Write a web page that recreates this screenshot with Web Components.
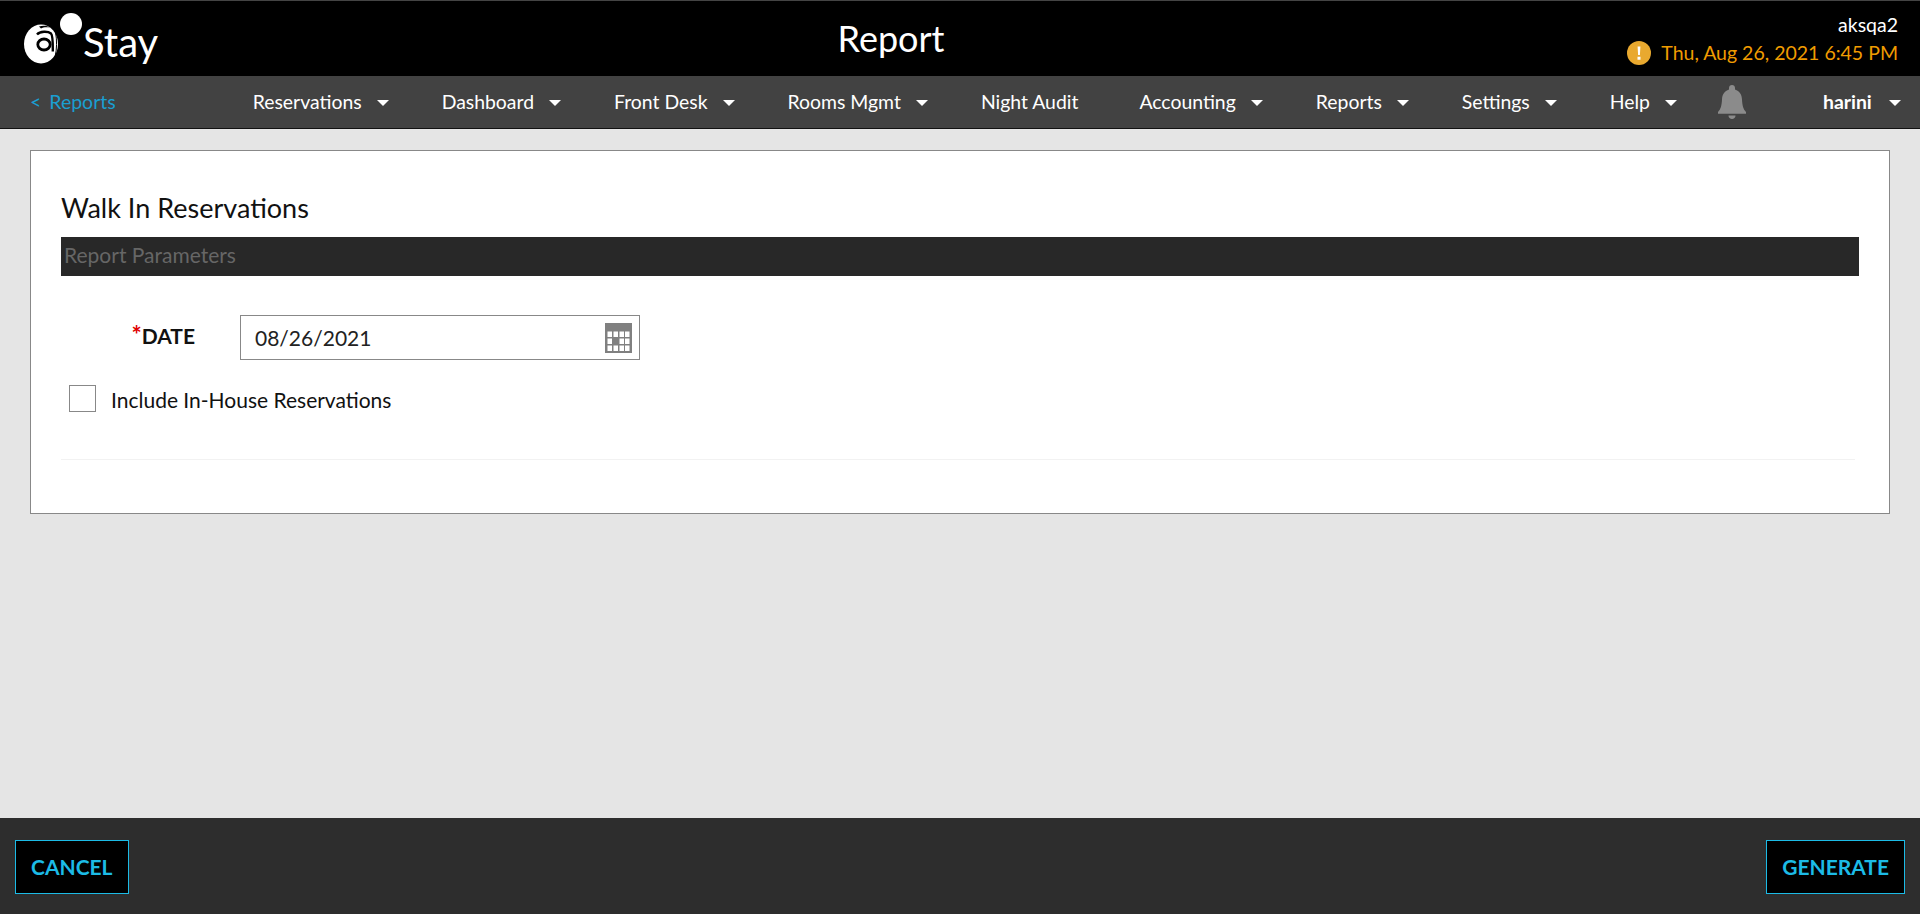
<!DOCTYPE html>
<html lang="en"><head><meta charset="utf-8"><title>Report</title>
<style>
html,body{margin:0;height:100%;background:#e5e5e5;font-family:Lato,"Liberation Sans",sans-serif;overflow:hidden}
app-shell{height:100vh}
</style></head><body>
<app-shell>
  <app-header slot="header" title-text="Report" account="aksqa2" datetime="Thu, Aug 26, 2021 6:45 PM"></app-header>
  <app-nav slot="nav">
    <back-link>Reports</back-link>
    <nav-item style="margin-left:137px">Reservations</nav-item>
    <nav-item>Dashboard</nav-item>
    <nav-item>Front Desk</nav-item>
    <nav-item>Rooms Mgmt</nav-item>
    <nav-item plain>Night Audit</nav-item>
    <nav-item>Accounting</nav-item>
    <nav-item>Reports</nav-item>
    <nav-item>Settings</nav-item>
    <nav-item>Help</nav-item>
    <bell-icon></bell-icon>
    <nav-item user>harini</nav-item>
  </app-nav>
  <report-panel slot="main" heading="Walk In Reservations" section="Report Parameters">
    <date-field label="DATE" value="08/26/2021"></date-field>
    <check-field>Include In-House Reservations</check-field>
  </report-panel>
  <app-footer slot="footer">
    <action-button>CANCEL</action-button>
    <action-button>GENERATE</action-button>
  </app-footer>
</app-shell>
<script>
function def(name, html, init){
  customElements.define(name, class extends HTMLElement{
    connectedCallback(){
      if(this.shadowRoot) return;
      const r=this.attachShadow({mode:'open'});
      r.innerHTML=html;
      if(init) init(this,r);
    }
  });
}
def('app-shell',`<style>:host{display:flex;flex-direction:column;height:100vh}
main{flex:1;min-height:0;display:block}</style>
<slot name="header"></slot><slot name="nav"></slot><main><slot name="main"></slot></main><slot name="footer"></slot>`);

def('app-header',`<style>
:host{display:flex;align-items:flex-start;justify-content:space-between;height:75px;background:#000;border-top:1px solid #444;color:#fff;position:relative;flex:none}
.logo{display:flex;align-items:flex-start;margin:0}
.logo svg{display:block;margin:12px 0 0 22px;width:62px;height:52px}
.stay{font:400 40px/1 Lato,sans-serif;margin:21px 0 0 -1px}
h1{position:absolute;left:0;right:0;margin:0;text-align:center;top:17px;padding-right:138px;font:400 36px/40px Lato,sans-serif;}
.right{margin:12px 22px 0 0;text-align:right}
.acct{font:400 19.5px/24px Lato,sans-serif}
.dt{display:flex;align-items:center;justify-content:flex-end;gap:10px;margin-top:4px;color:#f09c00;font:400 19.5px/24px Lato,sans-serif}
.dt svg{display:block;width:24px;height:24px}
</style>
<div class="logo">
<svg viewBox="0 0 62 52"><circle cx="49" cy="11" r="11" fill="#fff"/>
<ellipse cx="19" cy="31" rx="17" ry="19.500" fill="#fff"/>
<path d="M15 21.500C18 18 26 18 29 20.500c2 2 1.800 8.500 1.800 18" fill="none" stroke="#000" stroke-width="2.400"/>
<ellipse cx="22" cy="31.500" rx="6.200" ry="5.500" fill="none" stroke="#000" stroke-width="2.800"/>
<path d="M17 13.500c4-1.500 8-1 11 1-3-.5-7-.5-9 1z" fill="#000"/>
<path d="M33.500 19c1.500 8 1.500 17-.5 25" fill="none" stroke="#000" stroke-width="1"/>
</svg><span class="stay" id="s">Stay</span></div>
<h1 id="t"></h1>
<div class="right"><div class="acct" id="a"></div>
<div class="dt"><svg viewBox="0 0 24 24"><circle cx="12" cy="12" r="12" fill="#e9a92f"/><path d="M10.600 5.500h2.800l-.5 8.500h-1.800zM10.500 15.800h3v3h-3z" fill="#fff"/></svg><span id="d"></span></div></div>`,
(h,r)=>{r.getElementById('t').textContent=h.getAttribute('title-text');r.getElementById('a').textContent=h.getAttribute('account');r.getElementById('d').textContent=h.getAttribute('datetime');});

def('app-nav',`<style>:host{display:flex;align-items:center;height:50px;padding-bottom:2px;background:#424242;border-bottom:1px solid #111;padding-left:30px;color:#fff;font:400 18px Lato,sans-serif;flex:none}</style><slot></slot>`);
def('back-link',`<style>:host{display:flex;gap:8px;color:#1a9fd1;font:400 19.5px Lato,sans-serif}</style><span>&lt;</span><slot></slot>`);
def('nav-item',`<style>:host{display:flex;align-items:center;margin-right:53px;font:400 19.4px Lato,sans-serif;white-space:nowrap}
:host([plain]){margin-right:61px}
:host([user]){font-weight:700;margin-right:0;margin-left:77px}
i{display:block;width:0;height:0;margin:4px 0 0 15px;border-left:6px solid transparent;border-right:6px solid transparent;border-top:6px solid #fff}
:host([plain]) i{display:none}:host([user]) i{margin-left:17px}
</style><slot></slot><i></i>`);
def('bell-icon',`<style>:host{display:block;margin-left:-12px;width:28px;height:34px;margin-top:2px}svg{display:block}</style>
<svg width="28" height="34" viewBox="0 0 28 34"><path d="M14 0c1.800 0 3 1.200 3 3v1.500c4.500 1.500 6.800 5 7 10 .3 6 1.200 9.500 4 12.500v1.800H0V27c2.800-3 3.700-6.500 4-12.500.2-5 2.500-8.500 7-10V3c0-1.800 1.200-3 3-3z" fill="#8b8b8b"/><path d="M10.500 30.500h7c0 2-1.500 3.500-3.500 3.500s-3.500-1.500-3.500-3.500z" fill="#8b8b8b"/></svg>`);

def('report-panel',`<style>
:host{display:block;box-sizing:border-box;margin:21px 30px 0;height:364px;background:#fff;border:1px solid #888;padding:0 30px;color:#111}
h2{margin:0;padding-top:41px;font:400 27px/32px Lato,sans-serif;height:45px}
.bar{height:39px;background:#282828;color:#666;font:400 21px/36px Lato,sans-serif;padding-left:3px}
.body{height:184px;border-bottom:1px solid #f2f2f2;padding:39px 0 0;box-sizing:border-box;margin-right:4px}
</style><h2 id="h"></h2><div class="bar" id="b"></div><div class="body"><slot></slot></div>`,
(h,r)=>{r.getElementById('h').textContent=h.getAttribute('heading');r.getElementById('b').textContent=h.getAttribute('section');});

def('date-field',`<style>
:host{display:flex;align-items:center;height:45px;font:400 21px Lato,sans-serif}
label{width:134px;box-sizing:border-box;text-align:right;font-weight:700;margin-top:-5px;color:#111}
b{color:#e00000;font-weight:700;font-size:24px;line-height:0}
.box{margin-left:45px;width:400px;height:45px;box-sizing:border-box;border:1px solid #888;display:flex;align-items:center;justify-content:space-between;padding:0 7px 0 14px;color:#222}
svg{display:block}
.v{margin-top:-1px}
</style><label><b>*</b><span id="l"></span></label><div class="box"><span class="v" id="v"></span>
<svg width="27" height="30" viewBox="0 0 27 30"><rect width="27" height="30" fill="#808080"/>
<g fill="#fff">
<rect x="2.500" y="8.500" width="4.500" height="5.500"/><rect x="8.500" y="8.500" width="4.500" height="5.500"/><rect x="14.500" y="8.500" width="4.500" height="5.500"/><rect x="20" y="8.500" width="4.500" height="5.500"/>
<rect x="2.500" y="15.500" width="4.500" height="5.500"/><rect x="14.500" y="15.500" width="4.500" height="5.500"/><rect x="20" y="15.500" width="4.500" height="5.500"/>
<rect x="2.500" y="22.500" width="4.500" height="5.500"/><rect x="8.500" y="22.500" width="4.500" height="5.500"/><rect x="14.500" y="22.500" width="4.500" height="5.500"/><rect x="20" y="22.500" width="4.500" height="5.500"/>
</g></svg></div>`,
(h,r)=>{r.getElementById('l').textContent=h.getAttribute('label');r.getElementById('v').textContent=h.getAttribute('value');});

def('check-field',`<style>
:host{display:flex;align-items:center;margin-top:25px;padding-left:8px;font:400 21px Lato,sans-serif;color:#111}
i{display:block;width:27px;height:27px;box-sizing:border-box;border:1px solid #888;background:#fff;margin-right:15px}
span{margin-top:1px;display:block}
</style><i></i><span><slot></slot></span>`);

def('app-footer',`<style>:host{display:flex;align-items:center;justify-content:space-between;height:96px;background:#2d2d2d;padding:0 15px;box-sizing:border-box;flex:none}</style><slot></slot>`);
def('action-button',`<style>:host{display:flex;align-items:center;justify-content:center;height:54px;box-sizing:border-box;padding:0 15px;background:#000;border:1px solid #1cbbe6;color:#1cbbe6;font:700 21px Lato,sans-serif;margin-top:1px}</style><slot></slot>`);
</script>
</body></html>
